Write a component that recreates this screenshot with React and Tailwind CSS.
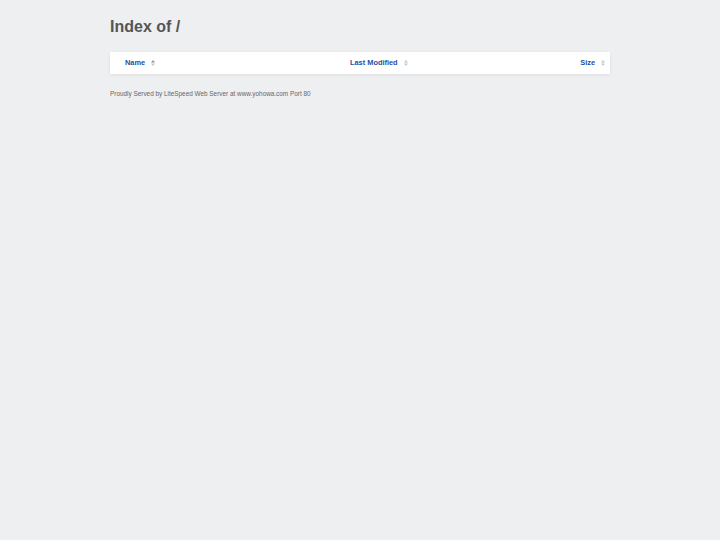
import React from 'react';

const SortIcon = ({ active }) => (
  <svg width="4" height="6" viewBox="0 0 4 6" className="ml-[6px] inline-block">
    <path d="M2 0 L4 2.4 L0 2.4 Z" fill={active ? '#8a94a6' : '#c2c8d2'} />
    <path d="M2 6 L4 3.6 L0 3.6 Z" fill="#c2c8d2" />
  </svg>
);

const App = () => {
  return (
    <div
      className="min-h-[540px] w-full bg-[#eeeff1]"
      style={{ fontFamily: '"Liberation Sans", Arial, sans-serif' }}
    >
      <div className="w-[500px] ml-[110px] pt-[17px]">
        <h1 className="text-[16px] leading-[19px] font-bold text-[#555555]">Index of /</h1>

        <div className="mt-[16px] bg-white h-[22px] shadow-[0_1px_3px_rgba(0,0,0,0.08)] grid grid-cols-[240px_1fr_auto] items-center">
          <div className="pl-[15px] flex items-center">
            <span className="text-[7.4px] font-bold text-[#1f4f9e]">Name</span>
            <SortIcon active />
          </div>
          <div className="flex items-center">
            <span className="text-[7.4px] font-bold text-[#1f4f9e]">Last Modified</span>
            <SortIcon />
          </div>
          <div className="pr-[5px] flex items-center">
            <span className="text-[7.4px] font-bold text-[#1f4f9e]">Size</span>
            <SortIcon />
          </div>
        </div>

        <p className="mt-[15px] text-[6.4px] text-[#666666]">
          Proudly Served by LiteSpeed Web Server at www.yohowa.com Port 80
        </p>
      </div>
    </div>
  );
};

export default App;
